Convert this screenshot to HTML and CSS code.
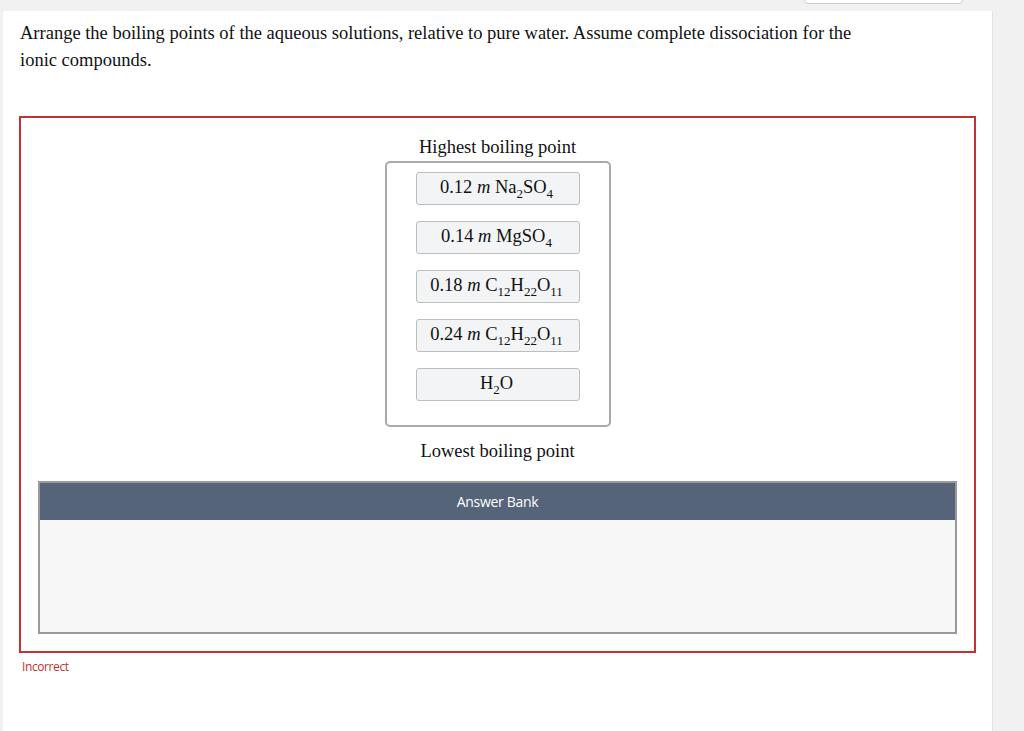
FILE: index.html
```html
<!DOCTYPE html>
<html>
<head>
<meta charset="utf-8">
<link rel="stylesheet" href="styles.css">
</head>
<body>
<div class="topbar"><div class="topbtn"></div></div>
<div class="card">
  <p class="question">Arrange the boiling points of the aqueous solutions, relative to pure water. Assume complete dissociation for the ionic compounds.</p>
  <div class="answer-box">
    <div class="label">Highest boiling point</div>
    <div class="rank">
      <div class="item"><span>0.12 <i>m</i> Na<sub>2</sub>SO<sub>4</sub></span></div>
      <div class="item"><span>0.14 <i>m</i> MgSO<sub>4</sub></span></div>
      <div class="item"><span>0.18 <i>m</i> C<sub>12</sub>H<sub>22</sub>O<sub>11</sub></span></div>
      <div class="item"><span>0.24 <i>m</i> C<sub>12</sub>H<sub>22</sub>O<sub>11</sub></span></div>
      <div class="item"><span>H<sub>2</sub>O</span></div>
    </div>
    <div class="label low">Lowest boiling point</div>
    <div class="bank">
      <div class="bank-head">Answer Bank</div>
      <div class="bank-body"></div>
    </div>
  </div>
  <div class="status">Incorrect</div>
</div>
</body>
</html>
```
FILE: styles.css
```css
html, body {
  margin: 0;
  padding: 0;
  background: #f1f1f1;
  height: 100%;
  overflow: hidden;
}
.topbar {
  height: 11px;
  display: flex;
  justify-content: flex-end;
  padding-right: 61px;
  width: 963px;
}
.topbtn {
  width: 157px;
  height: 20px;
  margin-top: -18px;
  background: #fff;
  border: 1px solid #cfcfcf;
  border-radius: 4px;
}
.card {
  margin-left: 3px;
  width: 957px;
  padding: 9px 16px 0 16px;
  background: #fff;
  min-height: 720px;
  box-shadow: 1px 0 0 #e2e2e2;
}
.question {
  margin: 0 0 42px 1px;
  font-family: "Liberation Serif", "Times New Roman", serif;
  font-size: 18.5px;
  line-height: 27px;
  color: #111;
  max-width: 850px;
}
.answer-box {
  border: 2px solid #c53030;
  display: flex;
  flex-direction: column;
  align-items: center;
  padding: 16px 0 17px 0;
}
.label {
  font-family: "Liberation Serif", "Times New Roman", serif;
  font-size: 18.5px;
  line-height: 27px;
  color: #111;
}
.label.low {
  margin-top: 11px;
  margin-bottom: 16px;
}
.rank {
  width: 164px;
  border: 2px solid #a9a9a9;
  border-radius: 5px;
  padding: 9px 29px 8px 29px;
}
.item {
  height: 31px;
  border: 1px solid #bdbdbd;
  border-radius: 3px;
  background: #f3f4f6;
  margin-bottom: 16px;
  display: flex;
  align-items: center;
  justify-content: center;
  font-family: "Liberation Serif", "Times New Roman", serif;
  font-size: 18.5px;
  color: #111;
}
.item span {
  line-height: 20px;
  position: relative;
  top: -2px;
  left: -1px;
}
.item sub {
  font-size: 13px;
  vertical-align: -5px;
  line-height: 0;
}
.bank {
  align-self: stretch;
  margin: 0 17px;
  border: 2px solid #9a9a9a;
}
.bank-head {
  height: 37px;
  background: #566479;
  color: #fff;
  font-family: "Open Sans", sans-serif;
  font-size: 14px;
  letter-spacing: -0.3px;
  display: flex;
  align-items: center;
  justify-content: center;
}
.bank-body {
  height: 112px;
  background: #f7f7f7;
}
.status {
  margin: 5px 0 0 3px;
  font-family: "Open Sans", sans-serif;
  font-size: 12px;
  letter-spacing: -0.4px;
  color: #c53030;
}
```
